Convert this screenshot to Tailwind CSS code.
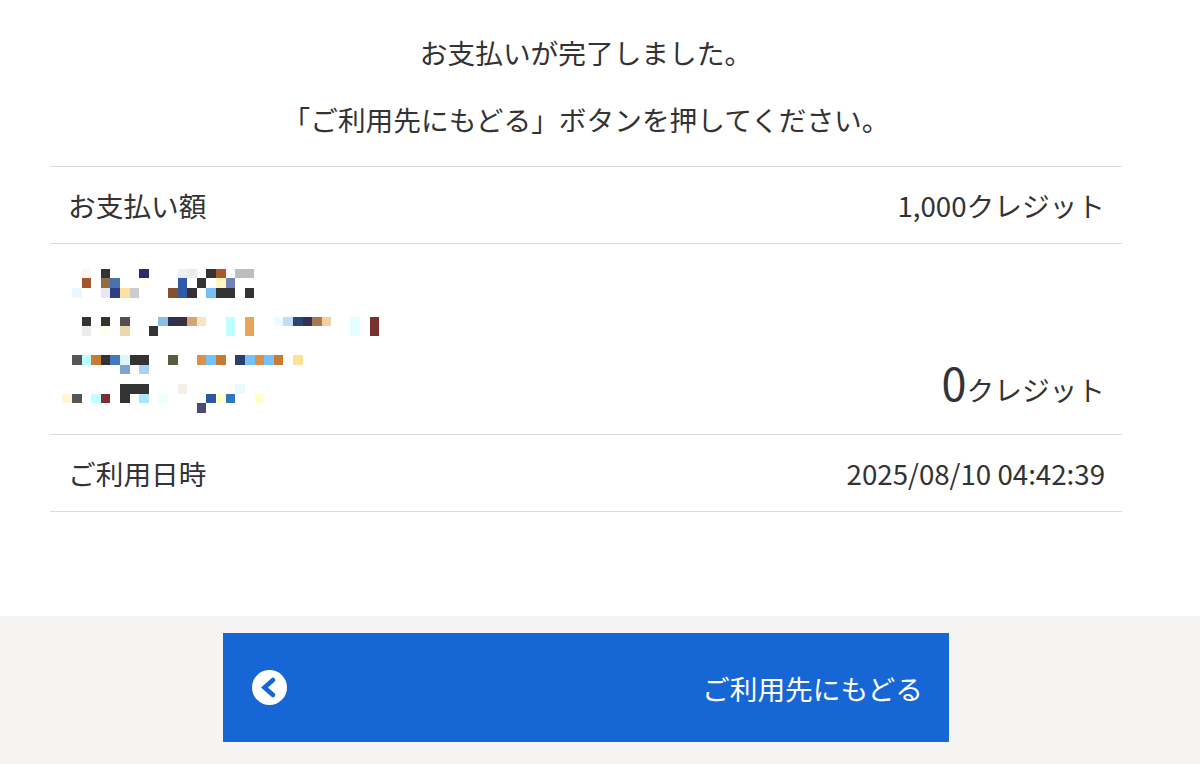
<!DOCTYPE html>
<html lang="ja"><head><meta charset="utf-8"><script src="https://cdn.jsdelivr.net/npm/@tailwindcss/browser@4"></script></head>
<body class="bg-white overflow-hidden">
<div class="w-[1200px] h-[764px] flex flex-col text-[#333333] font-['Noto_Sans_CJK_JP','Noto_Sans',sans-serif] text-[27.7px] leading-[40px]">
  <main class="h-[616px] w-[1172px] pt-[32px]">
    <p class="text-center">お支払いが完了しました。</p>
    <p class="text-center mt-[27px]">「ご利用先にもどる」ボタンを押してください。</p>
    <div class="mx-[50px] mt-[27px] border-t border-[#dcdcdc]">
      <div class="h-[77px] flex items-center justify-between pl-[18px] pr-[17px] border-b border-[#dcdcdc]"><span>お支払い額</span><span>1,000クレジット</span></div>
      <div class="h-[191px] flex justify-between pr-[17px] border-b border-[#dcdcdc]">
        <svg class="mt-[6px] block" width="350" height="170" viewBox="0 0 1050 510" shape-rendering="crispEdges">
          <g>
            <rect x="95" y="57" width="28" height="28" fill="#fff5ef"/><rect x="153" y="57" width="28" height="28" fill="#333"/><rect x="268" y="57" width="28" height="28" fill="#2b2b6b"/><rect x="383" y="57" width="28" height="28" fill="#e8f0f8"/><rect x="411" y="57" width="29" height="28" fill="#ebebeb"/><rect x="469" y="57" width="29" height="28" fill="#333"/><rect x="498" y="57" width="29" height="28" fill="#a85a2a"/><rect x="556" y="57" width="56" height="28" fill="#bdbdbd"/>
            <rect x="95" y="85" width="28" height="29" fill="#a5552a"/><rect x="153" y="85" width="28" height="29" fill="#8f6d45"/><rect x="181" y="85" width="29" height="29" fill="#4a70ad"/><rect x="268" y="85" width="28" height="29" fill="#fffff2"/><rect x="383" y="85" width="28" height="29" fill="#2f5aa8"/><rect x="440" y="85" width="29" height="29" fill="#333"/><rect x="498" y="85" width="29" height="29" fill="#fff8c0"/><rect x="527" y="85" width="29" height="29" fill="#7480b8"/>
            <rect x="66" y="114" width="29" height="29" fill="#e8f6ff"/><rect x="153" y="114" width="28" height="29" fill="#e8e8f2"/><rect x="181" y="114" width="29" height="29" fill="#2b3f80"/><rect x="210" y="114" width="29" height="29" fill="#ffdf9e"/><rect x="239" y="114" width="29" height="29" fill="#ccc"/><rect x="354" y="114" width="29" height="29" fill="#85502e"/><rect x="383" y="114" width="28" height="29" fill="#2f5aa8"/><rect x="411" y="114" width="29" height="29" fill="#333"/><rect x="469" y="114" width="29" height="29" fill="#75c0f5"/><rect x="498" y="114" width="58" height="29" fill="#333"/><rect x="585" y="114" width="27" height="29" fill="#333"/>
          </g>
          <g>
            <rect x="95" y="200" width="28" height="29" fill="#333"/><rect x="153" y="200" width="28" height="29" fill="#333"/><rect x="210" y="200" width="29" height="29" fill="#545050"/><rect x="325" y="200" width="29" height="29" fill="#8abde8"/><rect x="354" y="200" width="29" height="29" fill="#2f2f50"/><rect x="383" y="200" width="28" height="29" fill="#3a3040"/><rect x="411" y="200" width="29" height="29" fill="#d0a878"/><rect x="440" y="200" width="29" height="29" fill="#f8e5c0"/><rect x="527" y="200" width="29" height="58" fill="#c0ffff"/><rect x="585" y="200" width="27" height="58" fill="#e5a55a"/><rect x="672" y="200" width="28" height="29" fill="#effcff"/><rect x="700" y="200" width="29" height="29" fill="#bde0f5"/><rect x="729" y="200" width="29" height="29" fill="#2f4570"/><rect x="758" y="200" width="28" height="29" fill="#2f3358"/><rect x="786" y="200" width="29" height="29" fill="#a87850"/><rect x="815" y="200" width="28" height="29" fill="#f2d0a0"/><rect x="901" y="200" width="29" height="58" fill="#e3feff"/><rect x="959" y="200" width="29" height="58" fill="#7a2f30"/>
            <rect x="95" y="229" width="28" height="29" fill="#ebebeb"/><rect x="153" y="229" width="28" height="29" fill="#fffff0"/><rect x="210" y="229" width="29" height="29" fill="#ecd8b0"/><rect x="296" y="229" width="29" height="29" fill="#333"/>
          </g>
          <g>
            <rect x="66" y="316" width="29" height="29" fill="#555"/><rect x="95" y="316" width="28" height="29" fill="#b8ffff"/><rect x="123" y="316" width="30" height="29" fill="#c87a30"/><rect x="153" y="316" width="28" height="29" fill="#333"/><rect x="181" y="316" width="29" height="29" fill="#4278bd"/><rect x="210" y="316" width="29" height="29" fill="#dff5ff"/><rect x="239" y="316" width="57" height="29" fill="#333"/><rect x="354" y="316" width="29" height="29" fill="#5b5b40"/><rect x="440" y="316" width="29" height="29" fill="#d8914a"/><rect x="469" y="316" width="29" height="29" fill="#75c0ff"/><rect x="498" y="316" width="29" height="29" fill="#c87a30"/><rect x="556" y="316" width="29" height="29" fill="#2f4068"/><rect x="585" y="316" width="29" height="29" fill="#75c0ff"/><rect x="614" y="316" width="29" height="29" fill="#d8914a"/><rect x="643" y="316" width="29" height="29" fill="#75c0ff"/><rect x="672" y="316" width="28" height="29" fill="#c87a30"/><rect x="729" y="316" width="29" height="29" fill="#ffe098"/>
            <rect x="210" y="345" width="29" height="28" fill="#7fa3cf"/><rect x="268" y="345" width="28" height="28" fill="#abd0f5"/>
          </g>
          <g>
            <rect x="210" y="402" width="86" height="29" fill="#333"/><rect x="383" y="402" width="28" height="29" fill="#f5efe8"/><rect x="556" y="402" width="29" height="29" fill="#e8fbff"/>
            <rect x="37" y="431" width="29" height="29" fill="#fff5d8"/><rect x="66" y="431" width="29" height="29" fill="#555"/><rect x="123" y="431" width="30" height="29" fill="#c0ffff"/><rect x="153" y="431" width="28" height="29" fill="#7a2f30"/><rect x="210" y="431" width="29" height="29" fill="#333"/><rect x="268" y="431" width="28" height="29" fill="#aae5ff"/><rect x="325" y="431" width="29" height="29" fill="#effeff"/><rect x="469" y="431" width="29" height="29" fill="#2f55a5"/><rect x="498" y="431" width="29" height="29" fill="#ffffc8"/><rect x="527" y="431" width="29" height="29" fill="#2f75c0"/><rect x="614" y="431" width="29" height="29" fill="#ffffc8"/>
            <rect x="440" y="460" width="29" height="29" fill="#4f4878"/>
          </g>
        </svg>
        <div class="self-end pb-[22px] flex items-baseline"><span class="text-[45px] leading-[60px]">0</span><span>クレジット</span></div>
      </div>
      <div class="h-[77px] flex items-center justify-between pl-[18px] pr-[17px] border-b border-[#dcdcdc]"><span>ご利用日時</span><span>2025/08/10 04:42:39</span></div>
    </div>
  </main>
  <footer class="h-[148px] bg-[#f5f4f2] pt-[17px]">
    <div class="w-[1172px] flex justify-center">
      <a class="w-[726px] h-[109px] bg-[#1766d6] text-white flex items-center justify-between pl-[29px] pr-[26px]">
        <svg width="35" height="35" viewBox="0 0 35 35"><circle cx="17.5" cy="17.5" r="17.5" fill="#fff"/><path d="M21 10 L12.5 17.5 L21 25" fill="none" stroke="#1766d6" stroke-width="4.6" stroke-linecap="round" stroke-linejoin="miter"/></svg>
        <span>ご利用先にもどる</span>
      </a>
    </div>
  </footer>
</div>
</body></html>
